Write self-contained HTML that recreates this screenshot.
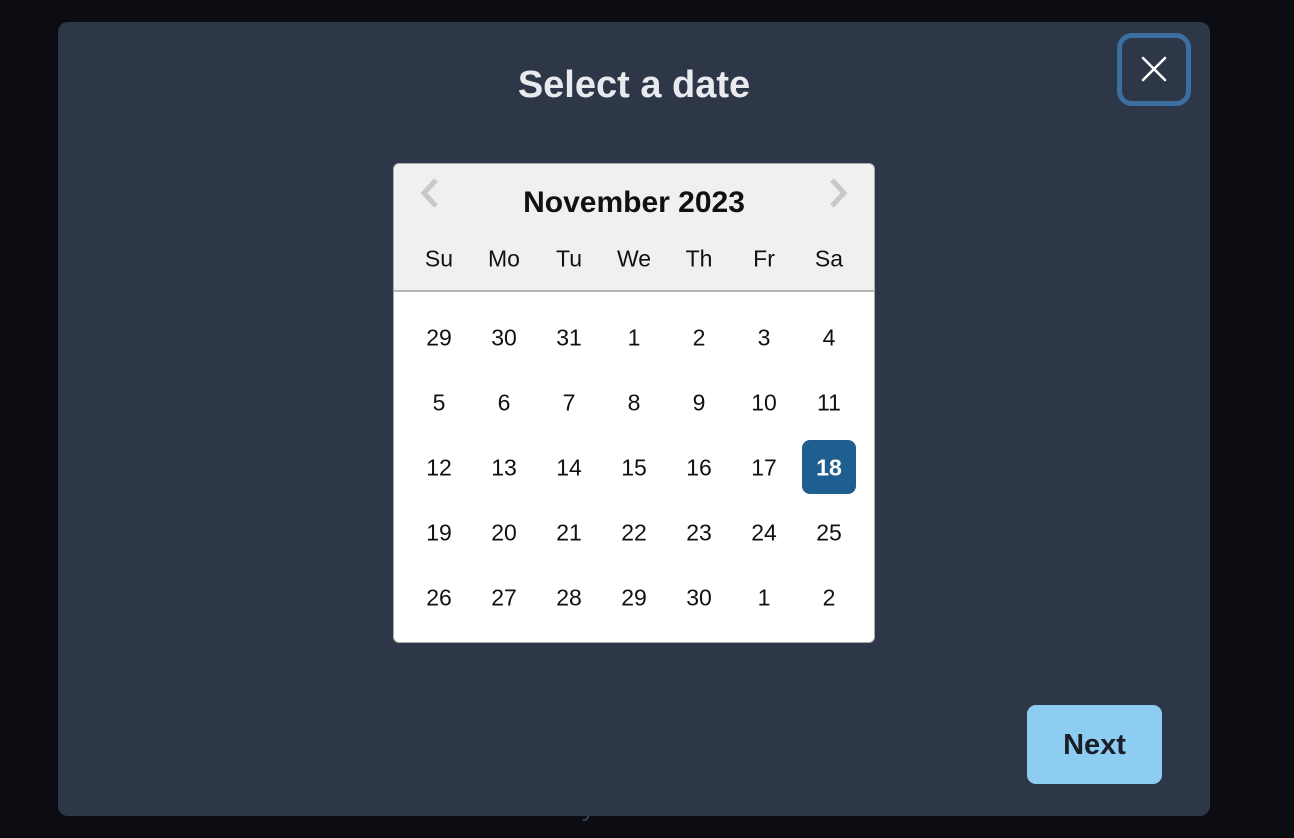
<!DOCTYPE html>
<html><head><style>
body{margin:0;width:1294px;height:838px;background:#0b0d12;font-family:"Liberation Sans",sans-serif;position:relative;overflow:hidden}
.modal{position:absolute;left:58px;top:22px;width:1152px;height:794px;background:#2e3748;border-radius:10px}
.title{position:absolute;left:334px;width:600px;top:64px;text-align:center;color:#e8eaee;font-size:38px;font-weight:bold}
.close{position:absolute;left:1117px;top:33px;width:64px;height:63px;border:5px solid #3b6fa0;border-radius:15px;box-sizing:content-box}
.cal{position:absolute;left:393px;top:163px;width:480px;height:478px;background:#fff;border:1px solid #aaa;border-radius:6px;overflow:hidden}
.hdr{position:absolute;left:0;top:0;width:480px;height:126px;background:#f0f0f0;border-bottom:2px solid #b5b5b5}
.c{position:absolute;width:60px;text-align:center;font-size:23px;color:#111;transform:translate(-30px,-50%)}
.next{position:absolute;left:1027px;top:705px;width:135px;height:79px;background:#8ecdf2;border-radius:9px;color:#1a1e26;font-size:29px;font-weight:bold;text-align:center;line-height:81px}
.sel{position:absolute;left:408px;top:276px;width:54px;height:54px;background:#1f5f8f;border-radius:8px}
</style></head><body>
<div style="position:absolute;left:560px;top:790px;color:#3a4250;font-size:28px">Gym beast</div>
<div class="modal"></div>
<div class="title">Select a date</div>
<div class="close"><svg width="64" height="63" viewBox="0 0 64 63"><path d="M21 20 L43 42 M43 20 L21 42" stroke="#fff" stroke-width="2.5" stroke-linecap="round"/></svg></div>
<div class="cal">
<div class="hdr"></div>
<svg style="position:absolute;left:22px;top:12px" width="30" height="36"><path d="M20 4 L8 17 L20 30" stroke="#c8c8c8" stroke-width="5" fill="none"/></svg>
<svg style="position:absolute;left:428px;top:12px" width="30" height="36"><path d="M10 4 L22 17 L10 30" stroke="#c8c8c8" stroke-width="5" fill="none"/></svg>
<div style="position:absolute;left:0;width:480px;top:22px;text-align:center;font-size:30px;font-weight:bold;color:#111">November 2023</div>
<div class="sel"></div>
<div id="g"></div>
</div>
<div class="next">Next</div>
<script>
var g=document.getElementById('g'),h='';
var d=['Su','Mo','Tu','We','Th','Fr','Sa'];
for(var i=0;i<7;i++)h+='<div class="c" style="left:'+(45+65*i)+'px;top:95px">'+d[i]+'</div>';
var n=[29,30,31,1,2,3,4,5,6,7,8,9,10,11,12,13,14,15,16,17,18,19,20,21,22,23,24,25,26,27,28,29,30,1,2];
for(var k=0;k<35;k++){var r=Math.floor(k/7),c=k%7;var s=k==20?'color:#fff;font-weight:bold;':'';
h+='<div class="c" style="'+s+'left:'+(45+65*c)+'px;top:'+(174+65*r)+'px">'+n[k]+'</div>';}
g.innerHTML=h;
</script>
</body></html>
